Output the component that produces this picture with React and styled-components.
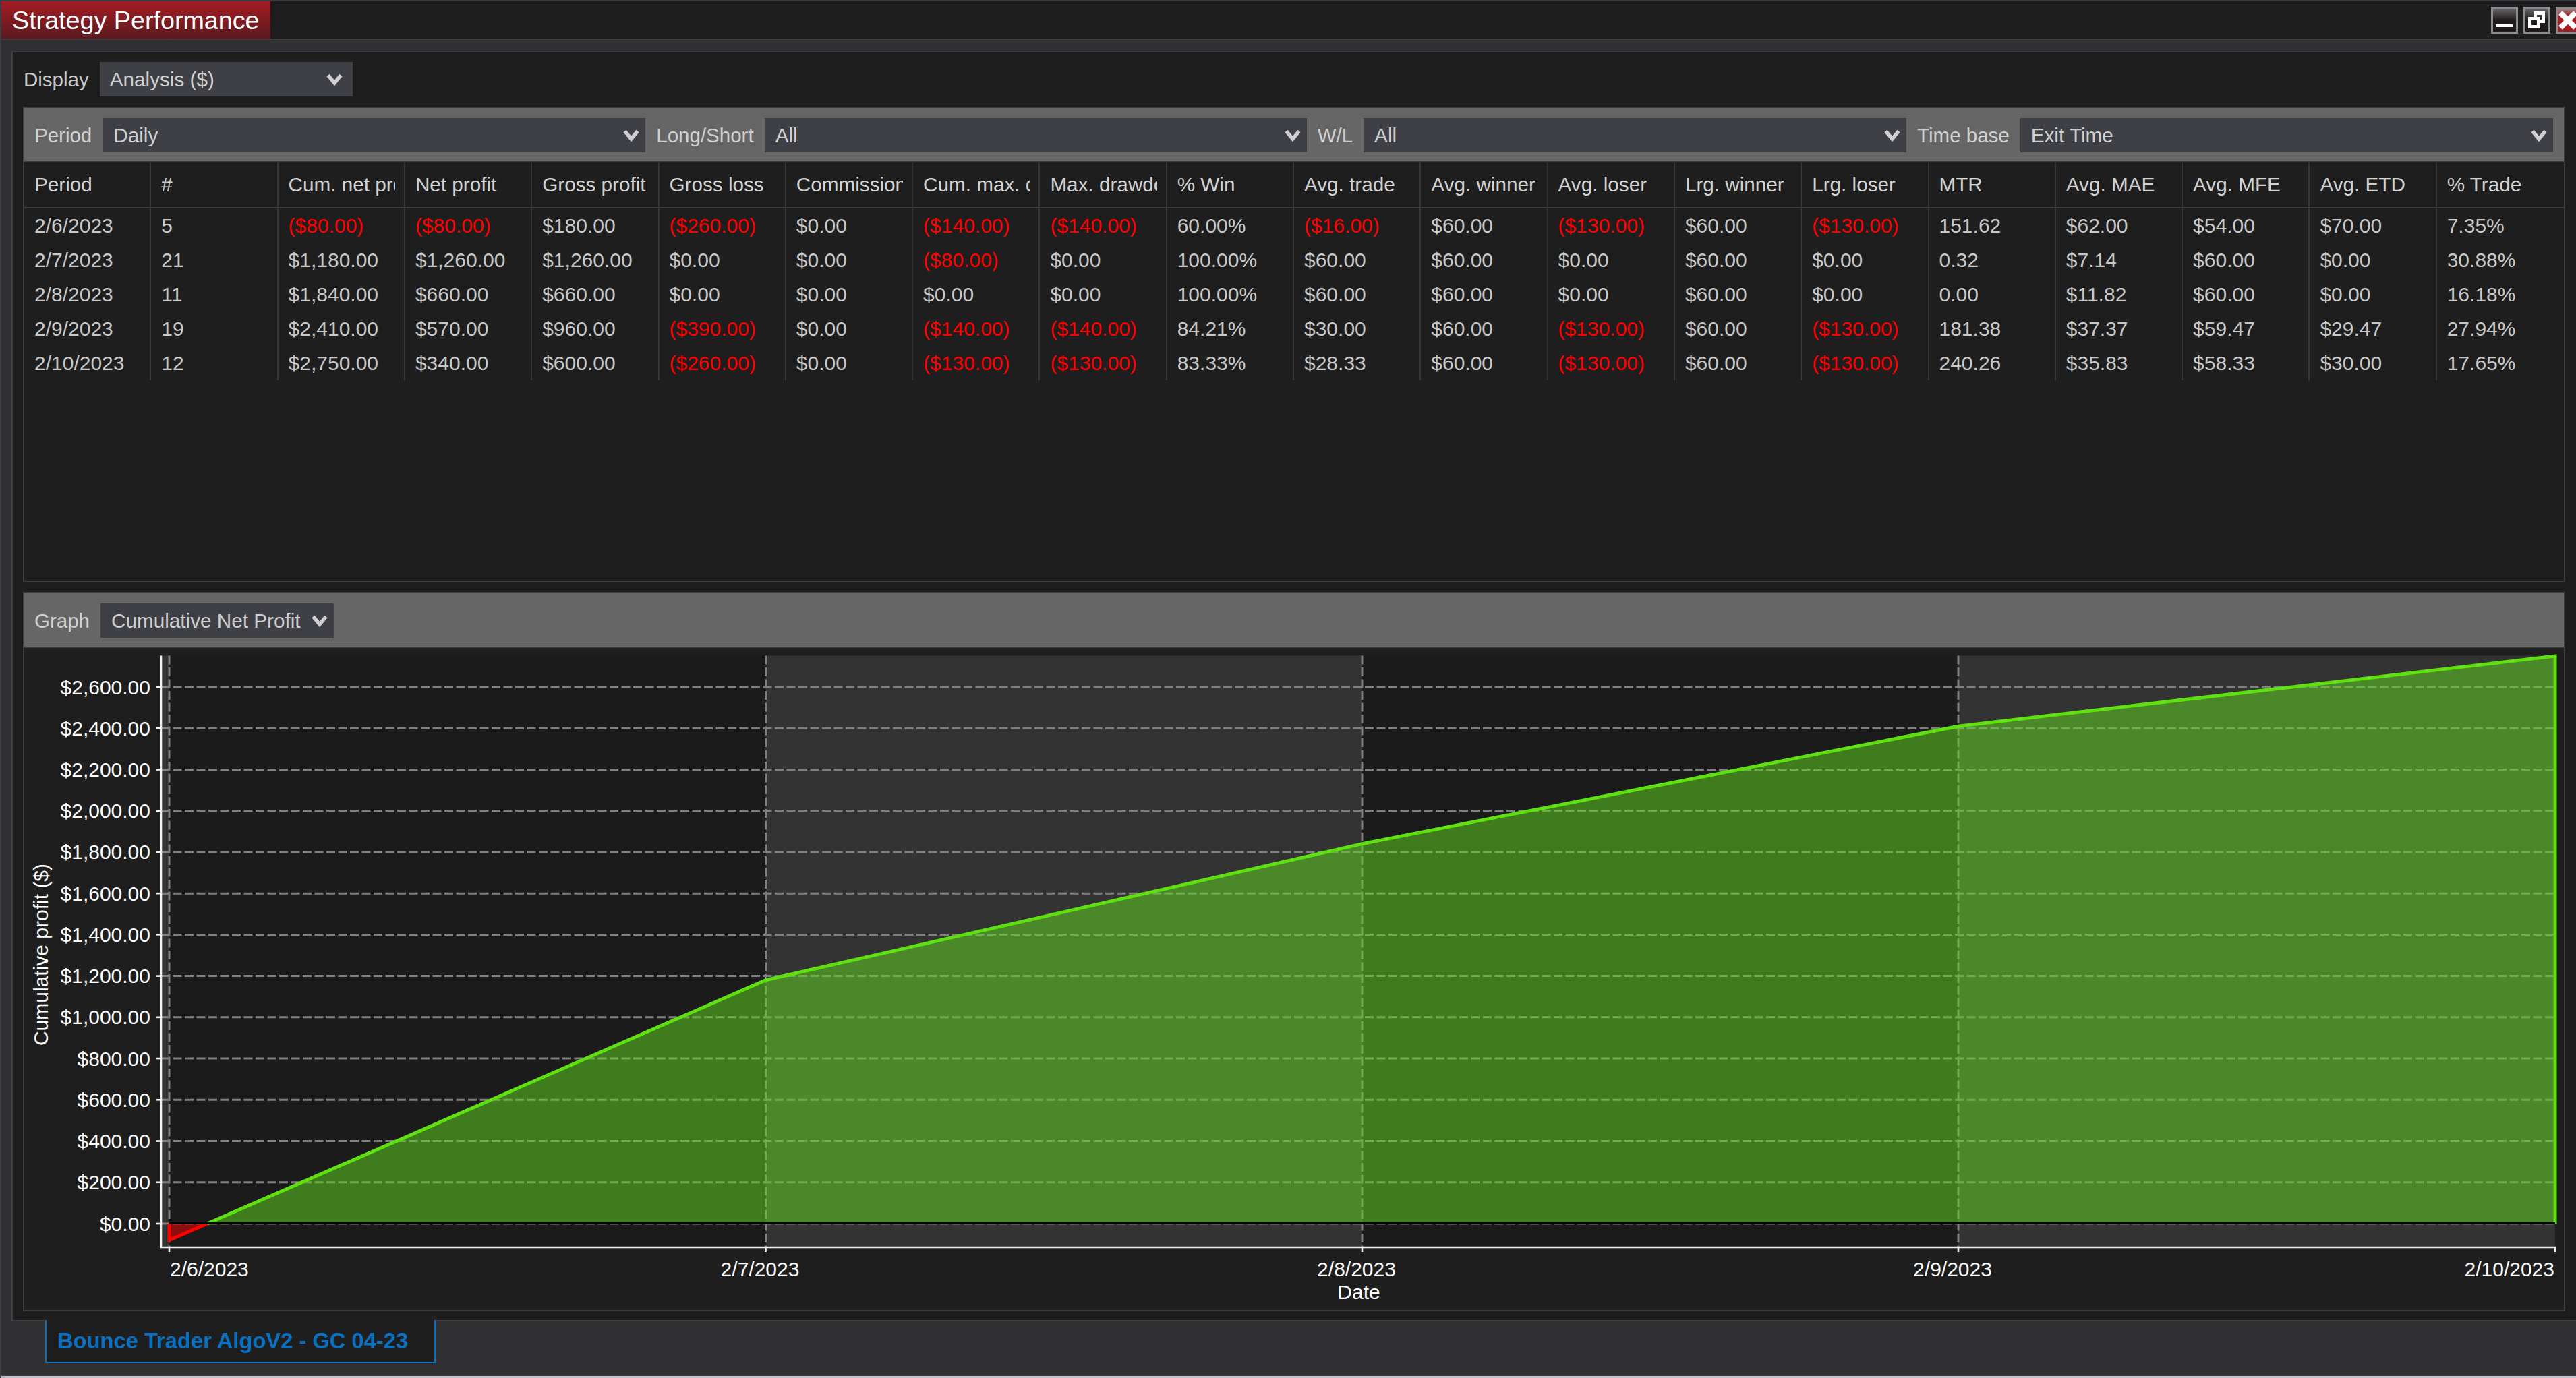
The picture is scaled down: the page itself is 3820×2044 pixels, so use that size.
import React from 'react';
import styled, { createGlobalStyle } from 'styled-components';

const Global = createGlobalStyle`
  html,body{margin:0;padding:0;background:#1e1e1e;overflow:hidden;}
  body{font-family:"Liberation Sans",Arial,sans-serif;}
`;

const line = '#3c3c42';
const Window = styled.div`width:3820px;height:2044px;box-sizing:border-box;overflow:hidden;display:flex;flex-direction:column;background:#1e1e1e;border-top:2px solid ${line};border-left:2px solid ${line};`;
const TitleBar = styled.div`height:58px;flex:none;box-sizing:border-box;display:flex;justify-content:space-between;align-items:flex-start;border-bottom:2px solid ${line};`;
const TitleTab = styled.div`height:56px;width:399px;box-sizing:border-box;padding-left:16px;display:flex;align-items:center;background:linear-gradient(#a51c24,#591a20);color:#fff;font-size:37.7px;white-space:nowrap;`;
const WinButtons = styled.div`display:flex;gap:8px;margin:8px -10px 0 0;`;
const WinButton = styled.div`width:40px;height:40px;box-sizing:border-box;border:3px solid #8b8b8f;background:${p => p.$close ? 'linear-gradient(#9a8a8c 0,#a51c24 30%,#a51c24 100%)' : 'linear-gradient(#66666a 0,#1e1a1c 50%,#1e1a1c 100%)'};display:flex;`;
const WinBody = styled.div`flex:1;min-height:0;display:flex;flex-direction:column;box-sizing:border-box;background:#303033;padding:15px 0 0 15px;`;
const Content = styled.div`height:1885px;flex:none;box-sizing:border-box;background:#1e1e1e;border:2px solid ${line};border-right:0;padding:15px 16px 0 15px;`;
const DisplayRow = styled.div`display:flex;align-items:center;height:51px;gap:16px;padding-left:1px;`;
const Label = styled.span`font-size:29.5px;color:${p => p.$bar ? '#d0d0d0' : '#c8c8c8'};white-space:nowrap;flex:none;`;
const SelectBox = styled.div`width:${p => p.$w}px;height:51px;flex:none;box-sizing:border-box;padding:0 ${p => p.$padR || 9}px 0 ${p => p.$pad || 16}px;display:flex;align-items:center;justify-content:space-between;background:#3f3f46;color:#cfcfcf;font-size:29.7px;white-space:nowrap;`;
const TablePanel = styled.div`margin-top:15px;height:706px;box-sizing:border-box;border:2px solid ${line};`;
const Toolbar = styled.div`height:81px;box-sizing:border-box;background:#666;border-bottom:2px solid ${line};padding:15px 15px 0 15px;display:flex;align-items:flex-start;gap:16px;`;
const BarLabel = styled(Label)`line-height:51px;`;
const Row = styled.div`display:grid;grid-template-columns:repeat(20,1fr);height:${p => p.$head ? '68px' : '51px'};box-sizing:border-box;${p => p.$head ? `border-bottom:2px solid ${line};` : ''}`;
const Cell = styled.div`box-sizing:border-box;min-width:0;padding:0 13px 0 15px;display:flex;align-items:center;border-right:${p => p.$last ? 'none' : '2px solid #35353a'};font-size:${p => p.$head ? '29.7px' : '30px'};color:${p => p.$neg ? '#ff0000' : p.$head ? '#d2d2d2' : '#c8c8c8'};`;
const CellText = styled.span`display:block;width:100%;overflow:hidden;white-space:nowrap;`;
const GraphPanel = styled.div`margin-top:14px;height:1067px;box-sizing:border-box;border:2px solid ${line};`;
const ChartSvg = styled.svg`display:block;width:3766px;height:982px;font-family:"Liberation Sans",Arial,sans-serif;`;
const Footer = styled.div`flex:1;min-height:0;padding-left:50px;`;
const DocTab = styled.div`width:579px;height:64px;margin-top:-2px;box-sizing:border-box;position:relative;background:#1e1e1e;border:2px solid #0a70c0;border-top:0;padding-left:16px;display:flex;align-items:center;color:#0a70c0;font-weight:700;font-size:32.7px;white-space:nowrap;`;
const BottomEdge = styled.div`height:3px;flex:none;margin-left:-2px;background:#bcbcc4;border-top:2px solid ${line};box-sizing:content-box;`;

const Chevron = () => (
  <svg width="24" height="18" viewBox="0 0 24 18" style={{ flex: 'none' }}>
    <path d="M2.5 2.5 L12 14 L21.5 2.5" fill="none" stroke="#cfcfcf" strokeWidth="5.5" />
  </svg>
);

const Select = ({ w, pad, padR, children }) => (
  <SelectBox $w={w} $pad={pad} $padR={padR}><span>{children}</span><Chevron /></SelectBox>
);

const MinIcon = () => (
  <svg width="34" height="34" viewBox="0 0 34 34"><rect x="4" y="23" width="25" height="4" fill="#fff" /></svg>
);
const RestoreIcon = () => (
  <svg width="34" height="34" viewBox="0 0 34 34">
    <rect x="14.5" y="6.5" width="12" height="12" fill="none" stroke="#fff" strokeWidth="5" />
    <rect x="6.5" y="14.5" width="13" height="12" fill="#1e1a1c" stroke="#fff" strokeWidth="5" />
  </svg>
);
const CloseIcon = () => (
  <svg width="34" height="34" viewBox="0 0 34 34">
    <path d="M4 6 L26 28 M26 6 L4 28" stroke="#fff" strokeWidth="8" />
  </svg>
);

const columns = ['Period', '#', 'Cum. net profit', 'Net profit', 'Gross profit', 'Gross loss', 'Commission', 'Cum. max. drawdown', 'Max. drawdown', '% Win', 'Avg. trade', 'Avg. winner', 'Avg. loser', 'Lrg. winner', 'Lrg. loser', 'MTR', 'Avg. MAE', 'Avg. MFE', 'Avg. ETD', '% Trade'];
const rows = [
  ['2/6/2023', '5', '($80.00)', '($80.00)', '$180.00', '($260.00)', '$0.00', '($140.00)', '($140.00)', '60.00%', '($16.00)', '$60.00', '($130.00)', '$60.00', '($130.00)', '151.62', '$62.00', '$54.00', '$70.00', '7.35%'],
  ['2/7/2023', '21', '$1,180.00', '$1,260.00', '$1,260.00', '$0.00', '$0.00', '($80.00)', '$0.00', '100.00%', '$60.00', '$60.00', '$0.00', '$60.00', '$0.00', '0.32', '$7.14', '$60.00', '$0.00', '30.88%'],
  ['2/8/2023', '11', '$1,840.00', '$660.00', '$660.00', '$0.00', '$0.00', '$0.00', '$0.00', '100.00%', '$60.00', '$60.00', '$0.00', '$60.00', '$0.00', '0.00', '$11.82', '$60.00', '$0.00', '16.18%'],
  ['2/9/2023', '19', '$2,410.00', '$570.00', '$960.00', '($390.00)', '$0.00', '($140.00)', '($140.00)', '84.21%', '$30.00', '$60.00', '($130.00)', '$60.00', '($130.00)', '181.38', '$37.37', '$59.47', '$29.47', '27.94%'],
  ['2/10/2023', '12', '$2,750.00', '$340.00', '$600.00', '($260.00)', '$0.00', '($130.00)', '($130.00)', '83.33%', '$28.33', '$60.00', '($130.00)', '$60.00', '($130.00)', '240.26', '$35.83', '$58.33', '$30.00', '17.65%'],
];

// chart works in page coordinates, the viewBox maps them onto the panel
const X0 = 251, Y0 = 1815, TOP = 972.5, AXIS_X = 239, AXIS_Y = 1850, RIGHT = 3789;
const xs = [251, 1135.5, 2020, 2904, 3789];
const vals = [-80, 1180, 1840, 2410, 2750];
const yOf = v => Y0 - v * 0.30615;
const crossX = X0 + (xs[1] - X0) * 80 / 1260;
const ticks = Array.from({ length: 14 }, (_, i) => i * 200);
const money = v => '$' + v.toLocaleString('en-US') + '.00';
const dates = ['2/6/2023', '2/7/2023', '2/8/2023', '2/9/2023', '2/10/2023'];
const linePts = xs.slice(1).map((x, i) => `${x},${yOf(vals[i + 1])}`).join(' ');

const Chart = () => (
  <ChartSvg viewBox="36 961 3766 982">
    <rect x={AXIS_X} y={TOP} width={X0 - AXIS_X} height={AXIS_Y - TOP} fill="#333" />
    <rect x={xs[0]} y={TOP} width={xs[1] - xs[0]} height={AXIS_Y - TOP} fill="#1b1b1b" />
    <rect x={xs[1]} y={TOP} width={xs[2] - xs[1]} height={AXIS_Y - TOP} fill="#333" />
    <rect x={xs[2]} y={TOP} width={xs[3] - xs[2]} height={AXIS_Y - TOP} fill="#1b1b1b" />
    <rect x={xs[3]} y={TOP} width={xs[4] - xs[3]} height={AXIS_Y - TOP} fill="#333" />

    {ticks.map(t => (
      <line key={t} x1={AXIS_X} x2={RIGHT} y1={yOf(t)} y2={yOf(t)} stroke="#808080" strokeWidth="3" strokeDasharray="13 4.5" />
    ))}
    {xs.slice(0, 4).map(x => (
      <line key={x} x1={x} x2={x} y1={TOP} y2={AXIS_Y} stroke="#808080" strokeWidth="3" strokeDasharray="13 4.5" />
    ))}

    <polygon points={`${crossX},${Y0} ${linePts} ${RIGHT},${Y0}`} fill="#5fd620" fillOpacity="0.52" />
    <polygon points={`${X0},${Y0} ${crossX},${Y0} ${X0},${yOf(-80)}`} fill="#ff0000" fillOpacity="0.5" />
    <polyline points={`${crossX},${Y0} ${linePts} ${RIGHT},${Y0}`} fill="none" stroke="#5fe010" strokeWidth="5" />
    <polyline points={`${X0},${Y0} ${X0},${yOf(-80)} ${crossX},${Y0}`} fill="none" stroke="#ff0000" strokeWidth="5" />
    <line x1={X0} x2={RIGHT} y1={Y0 - 0.5} y2={Y0 - 0.5} stroke="#000" strokeWidth="3" />

    <line x1={AXIS_X} x2={AXIS_X} y1={TOP} y2={AXIS_Y + 1} stroke="#f2f2f2" strokeWidth="2.6" />
    <line x1={AXIS_X - 1} x2={RIGHT + 1} y1={AXIS_Y} y2={AXIS_Y} stroke="#f2f2f2" strokeWidth="2.6" />
    {ticks.map(t => (
      <line key={t} x1={AXIS_X - 7} x2={AXIS_X} y1={yOf(t)} y2={yOf(t)} stroke="#f2f2f2" strokeWidth="2.6" />
    ))}
    {xs.map(x => (
      <line key={x} x1={x} x2={x} y1={AXIS_Y} y2={AXIS_Y + 7} stroke="#f2f2f2" strokeWidth="2.6" />
    ))}

    {ticks.map(t => (
      <text key={t} x="223" y={yOf(t) + 10.5} textAnchor="end" fontSize="30" fill="#fff">{money(t)}</text>
    ))}
    {dates.map((d, i) => (
      <text key={d} x={i === 0 ? 252 : i === 4 ? 3788 : xs[i] - 8.5} y="1893" textAnchor={i === 0 ? 'start' : i === 4 ? 'end' : 'middle'} fontSize="30" fill="#fff">{d}</text>
    ))}
    <text x="2015" y="1927" textAnchor="middle" fontSize="30" fill="#fff">Date</text>
    <text transform="translate(71 1416) rotate(-90)" textAnchor="middle" fontSize="30" fill="#fff">Cumulative profit ($)</text>
  </ChartSvg>
);

export default function App() {
  return (
    <Window>
      <Global />
      <TitleBar>
        <TitleTab>Strategy Performance</TitleTab>
        <WinButtons>
          <WinButton><MinIcon /></WinButton>
          <WinButton><RestoreIcon /></WinButton>
          <WinButton $close><CloseIcon /></WinButton>
        </WinButtons>
      </TitleBar>
      <WinBody>
        <Content>
          <DisplayRow>
            <Label>Display</Label>
            <Select w={375} pad={15} padR={15}>Analysis ($)</Select>
          </DisplayRow>
          <TablePanel>
            <Toolbar>
              <BarLabel $bar>Period</BarLabel>
              <Select w={805}>Daily</Select>
              <BarLabel $bar>Long/Short</BarLabel>
              <Select w={804}>All</Select>
              <BarLabel $bar>W/L</BarLabel>
              <Select w={805}>All</Select>
              <BarLabel $bar>Time base</BarLabel>
              <Select w={790}>Exit Time</Select>
            </Toolbar>
            <Row $head>
              {columns.map((c, i) => (
                <Cell key={c} $head $last={i === 19}><CellText>{c}</CellText></Cell>
              ))}
            </Row>
            {rows.map(r => (
              <Row key={r[0]}>
                {r.map((v, i) => (
                  <Cell key={i} $neg={v.startsWith('(')} $last={i === 19}><CellText>{v}</CellText></Cell>
                ))}
              </Row>
            ))}
          </TablePanel>
          <GraphPanel>
            <Toolbar>
              <BarLabel $bar>Graph</BarLabel>
              <Select w={346}>Cumulative Net Profit</Select>
            </Toolbar>
            <Chart />
          </GraphPanel>
        </Content>
        <Footer>
          <DocTab>Bounce Trader AlgoV2 - GC 04-23</DocTab>
        </Footer>
      </WinBody>
      <BottomEdge />
    </Window>
  );
}
